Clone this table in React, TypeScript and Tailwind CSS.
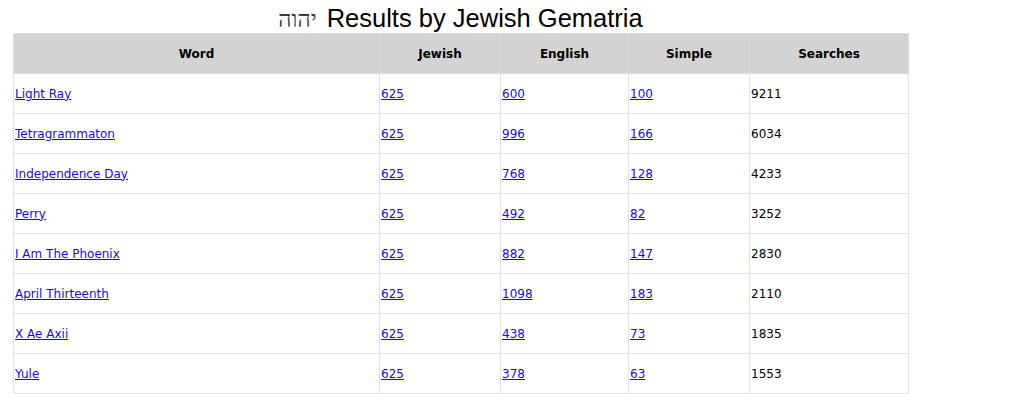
const rows: [string, string, string, string, string][] = [
  ["Light Ray", "625", "600", "100", "9211"],
  ["Tetragrammaton", "625", "996", "166", "6034"],
  ["Independence Day", "625", "768", "128", "4233"],
  ["Perry", "625", "492", "82", "3252"],
  ["I Am The Phoenix", "625", "882", "147", "2830"],
  ["April Thirteenth", "625", "1098", "183", "2110"],
  ["X Ae Axii", "625", "438", "73", "1835"],
  ["Yule", "625", "378", "63", "1553"],
];

const cols = ["Word", "Jewish", "English", "Simple", "Searches"];
const widths = ["w-[366px]", "w-[121px]", "w-[128px]", "w-[121px]", "w-[159px]"];

export default function App() {
  return (
    <div className="bg-white h-[394px] overflow-hidden">
      <div className="ml-[13px] w-[895px]">
        <h1 className="h-[33px] flex items-center justify-center gap-[10px] pt-[5px] text-black text-[25.5px] leading-none font-['Liberation_Sans',Arial,sans-serif]">
          <span className="text-[23px] text-[#3a3a3a] font-['DejaVu_Serif','Liberation_Serif',serif]" dir="rtl">יהוה</span>
          <span>Results by Jewish Gematria</span>
        </h1>
        <table className="w-[895px] table-fixed border-collapse text-[12px] font-['DejaVu_Sans',Verdana,sans-serif]">
          <thead>
            <tr className="h-[40px] bg-[#d3d3d3]">
              {cols.map((c, i) => (
                <th key={c} className={`${widths[i]} border border-[#dcdcdc] font-bold text-black text-center`}>
                  {c}
                </th>
              ))}
            </tr>
          </thead>
          <tbody>
            {rows.map((r) => (
              <tr key={r[0]} className="h-[40px]">
                {r.map((v, i) => (
                  <td key={i} className="border border-[#e2e2e2] px-[1px] text-left">
                    {i < 4 ? (
                      <a href="#" className="text-[#1a0dcc] underline">{v}</a>
                    ) : (
                      <span className="text-black">{v}</span>
                    )}
                  </td>
                ))}
              </tr>
            ))}
          </tbody>
        </table>
      </div>
    </div>
  );
}
